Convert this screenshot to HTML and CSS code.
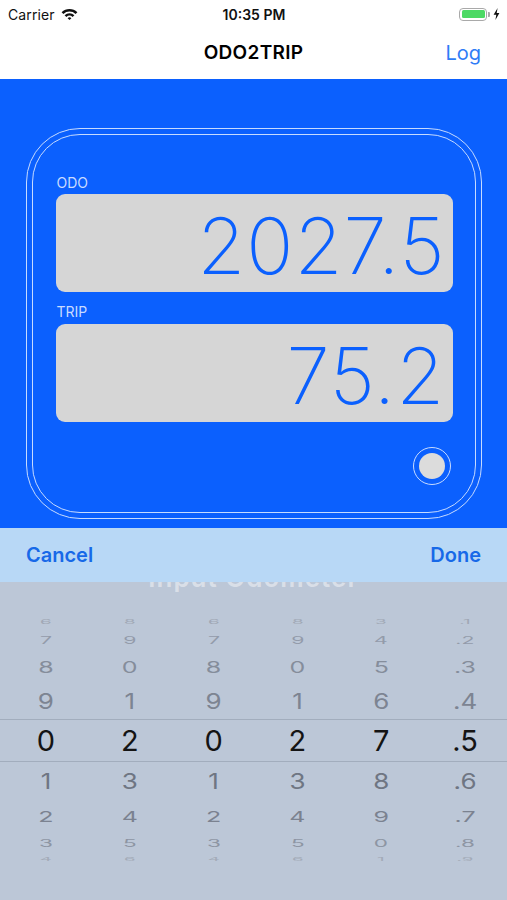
FILE: index.html
```html
<!DOCTYPE html>
<html>
<head>
<meta charset="utf-8">
<link rel="stylesheet" href="styles.css">
</head>
<body>
<div class="screen">
  <div class="status">
    <div class="status-left">
      <span class="carrier">Carrier</span>
      <svg class="wifi" width="17" height="12" viewBox="0 0 17 12">
        <path d="M0.6 4.2 A11.5 11.5 0 0 1 16.4 4.2 L14.6 6 A9 9 0 0 0 2.4 6 Z" fill="#111"/>
        <path d="M3.6 7.2 A7.2 7.2 0 0 1 13.4 7.2 L11.6 9 A4.6 4.6 0 0 0 5.4 9 Z" fill="#111"/>
        <path d="M6.6 10.2 A2.8 2.8 0 0 1 10.4 10.2 L8.5 12 Z" fill="#111"/>
      </svg>
    </div>
    <div class="time">10:35 PM</div>
    <div class="status-right">
      <div class="battery"><div class="battery-fill"></div></div>
      <div class="battery-nub"></div>
      <svg class="bolt" width="7" height="12" viewBox="0 0 7 12">
        <path d="M4.6 0 L0.6 6.8 L3.3 6.8 L2.4 12 L6.4 5 L3.7 5 Z" fill="#111"/>
      </svg>
    </div>
  </div>

  <div class="nav">
    <div></div>
    <div class="nav-title">ODO2TRIP</div>
    <div class="nav-right">Log</div>
  </div>

  <div class="main">
    <div class="frame">
      <div class="frame-inner">
        <div class="label">ODO</div>
        <div class="display"><span class="value">2027.5</span></div>
        <div class="label label-trip">TRIP</div>
        <div class="display"><span class="value">75.2</span></div>
        <div class="button-row">
          <div class="ring"><div class="dot"></div></div>
        </div>
      </div>
    </div>
  </div>

  <div class="toolbar">
    <span class="tool-btn">Cancel</span>
    <span class="tool-btn">Done</span>
  </div>

  <div class="picker">
    <div class="picker-title-clip"><div class="picker-title">Input Odometer</div></div>
    <div class="wheel">
      <div class="row r1"><span>6</span><span>8</span><span>6</span><span>8</span><span>3</span><span>.1</span></div>
      <div class="row r2"><span>7</span><span>9</span><span>7</span><span>9</span><span>4</span><span>.2</span></div>
      <div class="row r3"><span>8</span><span>0</span><span>8</span><span>0</span><span>5</span><span>.3</span></div>
      <div class="row r4"><span>9</span><span>1</span><span>9</span><span>1</span><span>6</span><span>.4</span></div>
      <div class="row sel"><span>0</span><span>2</span><span>0</span><span>2</span><span>7</span><span>.5</span></div>
      <div class="row r6"><span>1</span><span>3</span><span>1</span><span>3</span><span>8</span><span>.6</span></div>
      <div class="row r7"><span>2</span><span>4</span><span>2</span><span>4</span><span>9</span><span>.7</span></div>
      <div class="row r8"><span>3</span><span>5</span><span>3</span><span>5</span><span>0</span><span>.8</span></div>
      <div class="row r9"><span>4</span><span>6</span><span>4</span><span>6</span><span>1</span><span>.9</span></div>
    </div>
  </div>
</div>
</body>
</html>
```

FILE: styles.css
```css
* { box-sizing: border-box; }
html, body { margin: 0; padding: 0; }
body {
  width: 507px;
  height: 900px;
  overflow: hidden;
  font-family: "Inter", "Liberation Sans", sans-serif;
  background: #bcc7d7;
}
.screen { width: 507px; height: 900px; display: flex; flex-direction: column; }

/* status bar */
.status {
  height: 28px;
  background: #fff;
  display: grid;
  grid-template-columns: 1fr auto 1fr;
  align-items: center;
  padding: 0 7px 0 8px;
}
.status-left { display: flex; align-items: center; gap: 6px; }
.carrier { font-size: 14px; color: #111; letter-spacing: 0.1px; }
.wifi { margin-top: -1px; }
.time { font-size: 14px; font-weight: 600; color: #111; }
.status-right { display: flex; align-items: center; justify-content: flex-end; }
.battery {
  width: 28px; height: 13px;
  border: 1.5px solid #a9a9a9;
  border-radius: 4px;
  padding: 1.5px;
}
.battery-fill { width: 100%; height: 100%; background: #4cd964; border-radius: 1.5px; }
.battery-nub { width: 2px; height: 5px; background: #a9a9a9; border-radius: 0 1px 1px 0; margin-left: 1px; }
.bolt { margin-left: 3px; }

/* nav */
.nav {
  height: 51px;
  background: #fff;
  display: grid;
  grid-template-columns: 1fr auto 1fr;
  align-items: center;
  padding: 0 26px 2px 26px;
}
.nav-title { font-size: 19px; font-weight: 600; color: #000; letter-spacing: 0.3px; }
.nav-right { text-align: right; font-size: 20px; color: #2f7cf6; }

/* main blue area */
.main {
  height: 449px;
  background: #0b60fe;
  padding: 49px 25px 0 26px;
}
.frame {
  height: 391px;
  border: 1.5px solid #c7dbff;
  border-radius: 54px;
  padding: 5px;
}
.frame-inner {
  height: 100%;
  border: 1.5px solid #c7dbff;
  border-radius: 48px;
  padding: 40px 22.5px 0 22.5px;
  display: flex;
  flex-direction: column;
}
.label {
  font-size: 14px;
  line-height: 16px;
  color: #c9dbff;
  padding-left: 1px;
  margin-bottom: 3px;
}
.label-trip { margin-top: 12px; margin-bottom: 4px; }
.display {
  height: 98px;
  background: #d6d6d6;
  border-radius: 9px;
  display: flex;
  align-items: center;
  justify-content: flex-end;
  padding-right: 9px;
}
.value {
  font-size: 78px;
  font-weight: 200;
  color: #0b60fe;
  line-height: 1;
  letter-spacing: 1px;
  margin-top: 6px;
  margin-right: -2px;
}
.button-row { display: flex; justify-content: flex-end; margin-top: 25px; padding-right: 2px; }
.ring {
  width: 38px; height: 38px;
  border-radius: 50%;
  border: 1.5px solid #c7dbff;
  display: flex; align-items: center; justify-content: center;
}
.dot { width: 26px; height: 26px; border-radius: 50%; background: #dcdcdc; }

/* toolbar */
.toolbar {
  height: 54px;
  background: #b8d8f6;
  display: flex;
  align-items: center;
  justify-content: space-between;
  padding: 0 26px;
  position: relative;
  z-index: 1;
}
.tool-btn { font-size: 20px; font-weight: 600; color: #1769e8; }

/* picker */
.picker { flex: 1; background: #bcc7d7; }
.picker-title-clip { height: 10px; overflow: hidden; }
.picker-title {
  margin-top: -17px;
  text-align: center;
  font-size: 26px;
  font-weight: 600;
  line-height: 26px;
  color: rgba(255,255,255,0.45);
  letter-spacing: 1px;
}
.wheel { padding-top: 21px; }
.row {
  display: grid;
  grid-template-columns: repeat(6, 1fr);
  padding-left: 4px;
  align-items: center;
  color: #7d8492;
}
.row span { text-align: center; display: block; line-height: 10px; }
.r1 { height: 18px; font-size: 25px; color: #a0a8b5; }
.r1 span { transform: scale(0.75, 0.25); }
.r2 { height: 18px; font-size: 25px; color: #939baa; }
.r2 span { transform: scale(0.85, 0.42); }
.r3 { height: 35px; font-size: 25px; color: #858d9b; }
.r3 span { transform: scaleY(0.62); }
.r4 { height: 35px; font-size: 26px; color: #7d8492; }
.r4 span { transform: scaleY(0.8); }
.sel {
  height: 43px;
  font-size: 29px;
  color: #141414;
  border-top: 1px solid #a2adbd;
  border-bottom: 1px solid #a2adbd;
}
.r6 { height: 39px; font-size: 26px; color: #6f7683; }
.r6 span { transform: scaleY(0.8); }
.r7 { height: 32px; font-size: 25px; color: #7b8290; }
.r7 span { transform: scaleY(0.6); }
.r8 { height: 19px; font-size: 25px; color: #8d95a3; }
.r8 span { transform: scale(0.9, 0.42); }
.r9 { height: 14px; font-size: 25px; color: #a3abb8; }
.r9 span { transform: scale(0.75, 0.2); }
```
